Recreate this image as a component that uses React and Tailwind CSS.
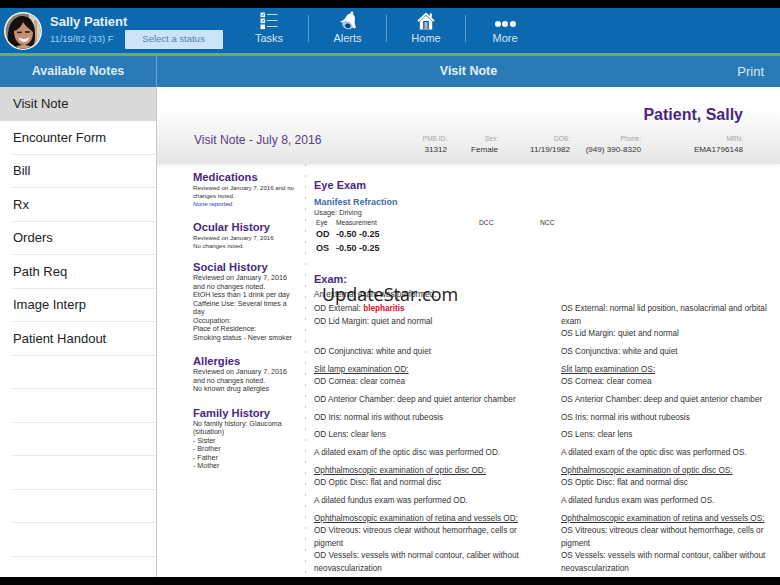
import React from 'react';

const notes = ['Visit Note', 'Encounter Form', 'Bill', 'Rx', 'Orders', 'Path Req', 'Image Interp', 'Patient Handout', '', '', '', '', '', '', ''];

const meta = [
  { label: 'PMS ID:', value: '31312', w: 'w-[40px]' },
  { label: 'Sex:', value: 'Female', w: 'w-[51px]' },
  { label: 'DOB:', value: '11/19/1982', w: 'w-[72px]' },
  { label: 'Phone:', value: '(949) 390-8320', w: 'w-[71px]' },
  { label: 'MRN:', value: 'EMA1796148', w: 'w-[102px]' }
];

const history = [
  { title: 'Medications', size: 'text-[6.1px] leading-[8px]', lines: ['Reviewed on January 7, 2016 and no changes noted.'], extra: 'None reported.', mb: 'mb-[13px]' },
  { title: 'Ocular History', size: 'text-[6.1px] leading-[7.5px]', lines: ['Reviewed on January 7, 2016', 'No changes noted.'], mb: 'mb-[12px]' },
  { title: 'Social History', size: 'text-[7.1px] leading-[8.5px]', lines: ['Reviewed on January 7, 2016 and no changes noted.', 'EtOH less than 1 drink per day', 'Caffeine Use: Several times a day', 'Occupation:', 'Place of Residence:', 'Smoking status - Never smoker'], mb: 'mb-[13px]' },
  { title: 'Allergies', size: 'text-[7.1px] leading-[8.5px]', lines: ['Reviewed on January 7, 2016 and no changes noted.', 'No known drug allergies'], mb: 'mb-[13px]' },
  { title: 'Family History', size: 'text-[7.1px] leading-[8.5px]', lines: ['No family history: Glaucoma (situation)', '- Sister', '- Brother', '- Father', '- Mother'], mb: '' }
];

const examRows = [
  [['OD Conjunctiva: white and quiet'], ['OS Conjunctiva: white and quiet']],
  [['#Slit lamp examination OD:', 'OD Cornea: clear cornea'], ['#Slit lamp examination OS:', 'OS Cornea: clear cornea']],
  [['OD Anterior Chamber: deep and quiet anterior chamber'], ['OS Anterior Chamber: deep and quiet anterior chamber']],
  [['OD Iris: normal iris without rubeosis'], ['OS Iris: normal iris without rubeosis']],
  [['OD Lens: clear lens'], ['OS Lens: clear lens']],
  [['A dilated exam of the optic disc was performed OD.'], ['A dilated exam of the optic disc was performed OS.']],
  [['#Ophthalmoscopic examination of optic disc OD:', 'OD Optic Disc: flat and normal disc'], ['#Ophthalmoscopic examination of optic disc OS:', 'OS Optic Disc: flat and normal disc']],
  [['A dilated fundus exam was performed OD.'], ['A dilated fundus exam was performed OS.']],
  [
    ['#Ophthalmoscopic examination of retina and vessels OD:', 'OD Vitreous: vitreous clear without hemorrhage, cells or pigment', 'OD Vessels: vessels with normal contour, caliber without neovascularization'],
    ['#Ophthalmoscopic examination of retina and vessels OS:', 'OS Vitreous: vitreous clear without hemorrhage, cells or pigment', 'OS Vessels: vessels with normal contour, caliber without neovascularization']
  ]
];

function ExamCell({ lines }) {
  return (
    <div className="w-[207px]">
      {lines.map((line, i) =>
        line.startsWith('#') ? (
          <p key={i} className="whitespace-nowrap">
            <span className="underline underline-offset-1">{line.slice(1)}</span>
          </p>
        ) : (
          <p key={i}>{line}</p>
        )
      )}
    </div>
  );
}

function TasksIcon() {
  return (
    <svg width="18" height="18" viewBox="0 0 18 18">
      <rect x="0.5" y="0.5" width="4.6" height="4.6" fill="white" />
      <rect x="0.5" y="6.5" width="4.6" height="4.6" fill="white" />
      <rect x="0.5" y="12.5" width="4.6" height="4.6" fill="white" />
      <path d="M1.5 2.8 L2.6 3.9 L4.2 1.6" fill="none" stroke="#0c69af" strokeWidth="0.9" />
      <path d="M1.5 8.8 L2.6 9.9 L4.2 7.6" fill="none" stroke="#0c69af" strokeWidth="0.9" />
      <rect x="7" y="2" width="10.5" height="0.9" fill="#dbe9f4" />
      <rect x="7" y="8" width="10.5" height="0.9" fill="#dbe9f4" />
      <rect x="7" y="14" width="10.5" height="0.9" fill="#dbe9f4" />
    </svg>
  );
}

function BellIcon() {
  return (
    <svg width="20" height="20" viewBox="0 0 20 20" fill="white">
      <circle cx="14" cy="1.8" r="1.4" />
      <path d="M13 2.6 C16.6 3.2 17.2 6.4 16.8 9.4 C16.5 12 16.8 14 18 16 L16.5 17.5 L2 10.5 C4.2 10.3 6 9 7.5 6.8 C9 4.6 10.2 2.2 13 2.6 Z" />
      <ellipse cx="9.3" cy="14.2" rx="5.4" ry="3.8" transform="rotate(24 9.3 14.2)" fill="#9cc6e6" />
      <ellipse cx="9.8" cy="14.8" rx="2.7" ry="2.2" transform="rotate(24 9.8 14.8)" fill="#0a3f6f" />
    </svg>
  );
}

function HomeIcon() {
  return (
    <svg width="18" height="18" viewBox="0 0 18 18">
      <path d="M9 0.6 L17.6 8.4 L16.4 9.7 L9 3 L1.6 9.7 L0.4 8.4 Z" fill="white" />
      <rect x="12.8" y="1.4" width="2" height="4.2" fill="white" />
      <path d="M2.8 9.2 L9 3.7 L15.2 9.2 V17.4 H2.8 Z" fill="white" />
      <rect x="6.2" y="9" width="5.6" height="8.4" fill="#0c4f86" />
      <rect x="7.6" y="10" width="2.8" height="7.4" fill="white" />
      <rect x="8.6" y="10" width="0.8" height="7.4" fill="#0c4f86" />
    </svg>
  );
}

function Avatar() {
  return (
    <svg width="38" height="38" viewBox="0 0 38 38">
      <defs>
        <clipPath id="avatar-clip"><circle cx="19" cy="19" r="17.5" /></clipPath>
      </defs>
      <circle cx="19" cy="19" r="19" fill="#f4f7fa" />
      <g clipPath="url(#avatar-clip)">
        <rect width="38" height="38" fill="#8b7d70" />
        <rect x="25" width="13" height="38" fill="#d9cfbf" />
        <rect x="30" y="8" width="3" height="30" fill="#b7a68f" />
        <path d="M4 38 C3 24 3 7 17 4 C27 3 31 12 31 22 C31 30 30 34 28 38 Z" fill="#16100f" />
        <path d="M10 19 C14 18 17 15 19 10 C22 15 26 17 29 20 C29 28 25 33 20 33 C14 33 10 27 10 19 Z" fill="#c88f72" />
        <path d="M14.5 25.5 C18 27.5 22 27.5 25.5 25 C24.5 29 22 30 20 30 C18 30 15.5 29 14.5 25.5 Z" fill="#fbf6f2" />
        <rect x="13" y="19.6" width="4.8" height="1.6" fill="#2f201c" />
        <rect x="21" y="19.2" width="4.8" height="1.6" fill="#2f201c" />
        <path d="M9 38 C12 34 15 33 19 33 C24 33 27 34 30 38 Z" fill="#c9957b" />
      </g>
    </svg>
  );
}

export default function App() {
  return (
    <div className="w-[780px] h-[585px] flex flex-col overflow-hidden bg-black font-['Liberation_Sans',Arial,sans-serif]">
      <div className="h-2 bg-black shrink-0" />

      {/* Top bar */}
      <header className="h-[45px] shrink-0 bg-[#0c69af] flex text-white">
        <div className="w-[230px] flex items-center pl-[4px]">
          <Avatar />
          <div className="ml-[8px] flex-1">
            <p className="text-[13px] font-bold leading-4 mt-[1px] text-[#e8f2fa]">Sally Patient</p>
            <div className="flex items-center">
              <span className="text-[9.4px] text-[#a8cfee] w-[74.5px] mt-[1px]">11/19/82 (33) F</span>
              <span className="w-[98px] h-[19px] bg-[#cde4f8] rounded-[1px] text-[9.5px] text-[#4a86bb] flex items-center justify-center">Select a status</span>
            </div>
          </div>
        </div>
        <nav className="flex items-center">
          <div className="w-[78px] flex flex-col items-center self-start pt-[3px]">
            <div className="h-[20px] flex items-center"><TasksIcon /></div>
            <span className="text-[11px] leading-3 mt-[1px] text-[#d6e6f3]">Tasks</span>
          </div>
          <div className="w-px h-[27px] -mt-[4px] bg-[#5c9dcd]" />
          <div className="w-[77px] flex flex-col items-center self-start pt-[3px]">
            <div className="h-[20px] flex items-center"><BellIcon /></div>
            <span className="text-[11px] leading-3 mt-[1px] text-[#d6e6f3]">Alerts</span>
          </div>
          <div className="w-px h-[27px] -mt-[4px] bg-[#5c9dcd]" />
          <div className="w-[78px] flex flex-col items-center self-start pt-[3px]">
            <div className="h-[20px] flex items-center"><HomeIcon /></div>
            <span className="text-[11px] leading-3 mt-[1px] text-[#d6e6f3]">Home</span>
          </div>
          <div className="w-px h-[27px] -mt-[4px] bg-[#5c9dcd]" />
          <div className="w-[78px] flex flex-col items-center self-start pt-[3px]">
            <div className="h-[20px] flex items-center gap-[1.5px] pt-[6px]">
              <span className="w-[6px] h-[6px] rounded-full bg-white" />
              <span className="w-[6px] h-[6px] rounded-full bg-white" />
              <span className="w-[6px] h-[6px] rounded-full bg-white" />
            </div>
            <span className="text-[11px] leading-3 mt-[1px] text-[#d6e6f3]">More</span>
          </div>
        </nav>
      </header>
      <div className="h-[3px] shrink-0 bg-[#6cb33f]" />

      {/* Sub header */}
      <div className="h-[31px] shrink-0 bg-[#2a7ab8] flex text-white">
        <div className="w-[157px] border-r border-[#6ba5d2] flex items-center justify-center text-[12.5px] font-bold text-[#dcebf6]">Available Notes</div>
        <div className="flex-1 grid grid-cols-[1fr_auto_1fr] items-center">
          <span />
          <span className="text-[12.5px] font-bold text-[#e4f0f9]">Visit Note</span>
          <span className="text-[13px] text-[#dcebf6] text-right pr-[16px]">Print</span>
        </div>
      </div>

      <div className="flex-1 flex bg-white min-h-0">
        {/* Sidebar */}
        <aside className="w-[157px] shrink-0 border-r border-[#c9c9c9] overflow-hidden">
          {notes.map((n, i) => (
            <div key={i} className={i === 0 ? 'h-[34px] bg-[#d9d9d9] flex items-center pl-[13px]' : 'h-[33.5px] pl-[12px]'}>
              {i === 0 ? (
                <span className="text-[13px] text-[#222]">{n}</span>
              ) : (
                <div className="h-full border-b border-[#e8e8e8] flex items-center pl-px">
                  <span className="text-[13px] text-[#222]">{n}</span>
                </div>
              )}
            </div>
          ))}
        </aside>

        <main className="flex-1 min-w-0 relative overflow-hidden">
          {/* Patient banner */}
          <section className="h-[77px] bg-gradient-to-b from-white from-[25%] to-[#e6e6e6] shadow-[0_2px_3px_rgba(0,0,0,0.06)] pt-[19px] px-[37px]">
            <p className="text-[16px] font-bold text-[#46287f] text-right leading-[18px]">Patient, Sally</p>
            <div className="flex items-start mt-[9px]">
              <p className="flex-1 text-[12.1px] text-[#54408a] leading-[15px]">Visit Note - July 8, 2016</p>
              <div className="flex mt-[2px]">
                {meta.map(m => (
                  <div key={m.label} className={`${m.w} text-right`}>
                    <p className="text-[6.5px] text-[#a5a5a5] leading-[8px]">{m.label}</p>
                    <p className="text-[8.1px] text-[#333] leading-[14px] whitespace-nowrap">{m.value}</p>
                  </div>
                ))}
              </div>
            </div>
          </section>

          <section className="flex pl-[36px] pt-[7px]">
            {/* History column */}
            <div className="w-[112px] shrink-0 pr-[8px] text-[#333]">
              {history.map(h => (
                <div key={h.title} className={h.mb}>
                  <h3 className="text-[11.2px] font-bold text-[#46287f] leading-[13px]">{h.title}</h3>
                  <div className={h.size}>
                    {h.lines.map((l, i) => <p key={i}>{l}</p>)}
                    {h.extra && <p className="italic text-[#2a2ad0]">{h.extra}</p>}
                  </div>
                </div>
              ))}
            </div>

            {/* Dotted separator */}
            <div className="w-px shrink-0 -mt-[7px] h-[420px] bg-[repeating-linear-gradient(to_bottom,#c4c4c4_0,#c4c4c4_2px,transparent_2px,transparent_11px)]" />

            {/* Exam column */}
            <div className="flex-1 pl-[8px] text-[#333]">
              <h2 className="text-[11px] font-bold text-[#46287f] mt-[7px] leading-[14px]">Eye Exam</h2>
              <h3 className="text-[9px] font-bold text-[#3f6ba3] mt-[4px] leading-[12px]">Manifest Refraction</h3>
              <p className="text-[7.3px] leading-[9px]">Usage: Driving</p>
              <div className="flex text-[6.7px] leading-[9px] mt-[1px] pl-[2px]">
                <span className="w-[20px]">Eye</span>
                <span className="w-[143px]">Measurement</span>
                <span className="w-[61px]">DCC</span>
                <span>NCC</span>
              </div>
              <div className="text-[9px] font-bold text-[#1c1c1c] leading-[14px] pl-[2px]">
                <p className="flex"><span className="w-[20px]">OD</span><span>-0.50 -0.25</span></p>
                <p className="flex"><span className="w-[20px]">OS</span><span>-0.50 -0.25</span></p>
              </div>

              <h2 className="text-[11px] font-bold text-[#46287f] mt-[18px] leading-[13px]">Exam:</h2>
              <div className="text-[8.2px] leading-[12.5px] mt-[3px]">
                <p className="mb-[1.5px]">An external exam was performed.</p>
                <div className="grid grid-cols-[247px_1fr] mb-[5.25px]">
                  <div>
                    <p>OD External: <b className="text-[#c8161d]">blepharitis</b></p>
                    <p>OD Lid Margin: quiet and normal</p>
                  </div>
                  <div className="w-[207px]">
                    <p>OS External: normal lid position, nasolacrimal and orbital exam</p>
                    <p>OS Lid Margin: quiet and normal</p>
                  </div>
                </div>
                {examRows.map((row, i) => (
                  <div key={i} className="grid grid-cols-[247px_1fr] mb-[5.25px]">
                    <ExamCell lines={row[0]} />
                    <ExamCell lines={row[1]} />
                  </div>
                ))}
              </div>
            </div>
          </section>

          {/* Watermark */}
          <span className="absolute left-[165px] top-[195px] text-[18px] leading-6 text-[#1a1a1a] font-['Open_Sans',sans-serif]">UpdateStar.com</span>
        </main>
      </div>
      <div className="h-2 bg-black shrink-0" />
    </div>
  );
}
